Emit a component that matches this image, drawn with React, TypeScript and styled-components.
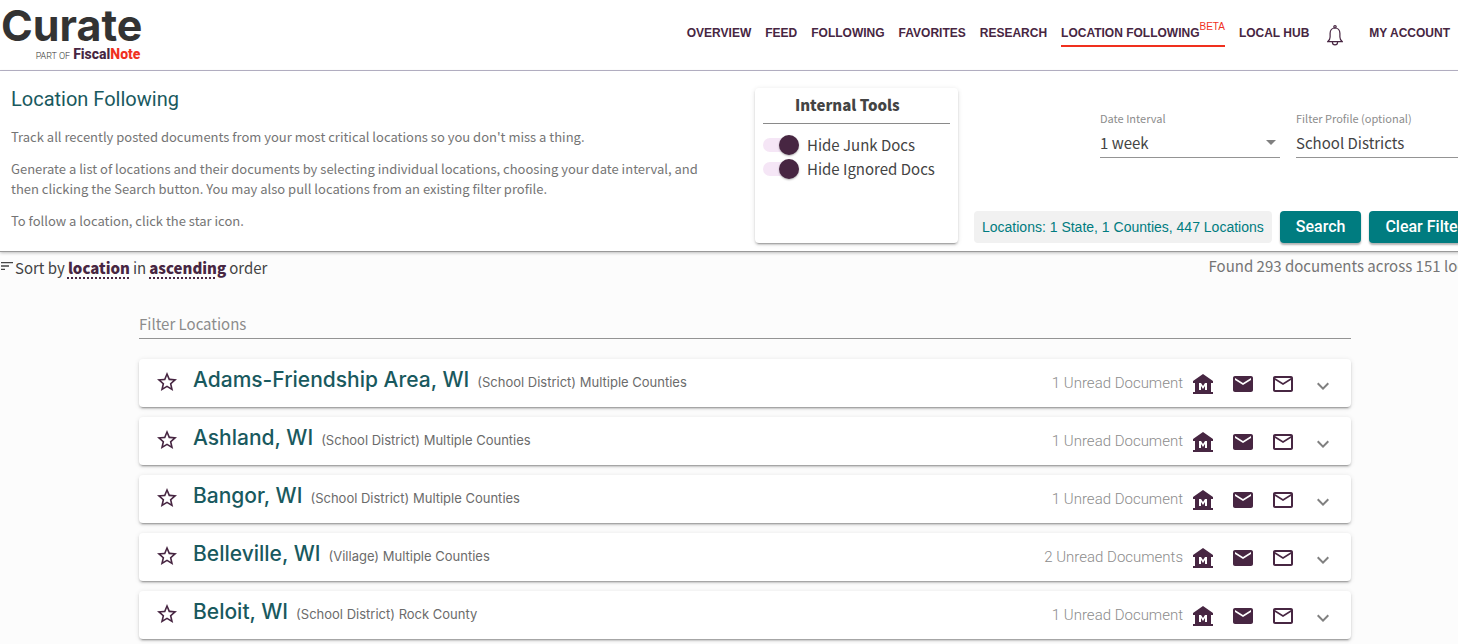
import React from "react";
import styled, { createGlobalStyle } from "styled-components";
import {
  MdEmail,
  MdExpandMore,
  MdMailOutline,
  MdMuseum,
  MdSort,
  MdStarBorder,
} from "react-icons/md";

const plum = "#472642";
const teal = "#007c80";
const deepTeal = "#19595e";
const red = "#f0301e";
const sourceStack = '"Noto Sans CJK SC", "Noto Sans", sans-serif';
const displayStack = "Roboto, sans-serif";
const headingStack = "Inter, sans-serif";
const helveticaStack = '"Liberation Sans", Arial, sans-serif';

const GlobalStyle = createGlobalStyle`
  *, *::before, *::after { box-sizing: border-box; }
  body {
    margin: 0;
    background: #fcfcfc;
    color: #444;
    font-family: ${sourceStack};
    font-size: 15px;
    line-height: 24px;
    overflow-x: hidden;
  }
  button, input, select { font: inherit; color: inherit; margin: 0; }
  h1, h2, h3, p { margin: 0; }
`;

const Header = styled.header`
  display: flex;
  justify-content: space-between;
  height: 71px;
  padding-right: 8px;
  background: #fff;
  border-bottom: 1px solid #b9b5c9;
`;

const Logo = styled.a`
  display: flex;
  flex-direction: column;
  align-items: flex-end;
  padding: 4px 0 0 1px;
  color: #333;
  text-decoration: none;
`;

const Wordmark = styled.span`
  font: 700 43px/42px ${headingStack};
`;

const Tagline = styled.span`
  display: flex;
  align-items: baseline;
  gap: 3px;
  padding-right: 2px;
  font: 300 9px/16px ${displayStack};
`;

const Fiscal = styled.strong`
  font-size: 14px;
  font-weight: 800;
  color: ${plum};
  em { font-style: normal; color: ${red}; }
`;

const Nav = styled.nav`
  display: flex;
  align-items: flex-start;
  gap: 14px;
  padding-top: 19px;
`;

const NavLink = styled.a<{ $active?: boolean }>`
  display: flex;
  height: 28px;
  font: 700 12px/28px ${helveticaStack};
  color: ${plum};
  text-decoration: none;
  white-space: nowrap;
  border-bottom: 2px solid ${(p) => (p.$active ? red : "transparent")};
`;

const Beta = styled.span`
  font-size: 10px;
  font-weight: 400;
  line-height: 16px;
  color: ${red};
`;

const BellButton = styled.button`
  display: flex;
  margin: 6px 12px 0 4px;
  padding: 0;
  border: 0;
  background: none;
  color: ${plum};
`;

const Content = styled.main`
  width: calc(100% + 32px);
`;

const Panel = styled.section`
  display: grid;
  grid-template-columns: 50% 203px minmax(0, 1fr);
  column-gap: 10px;
  padding-bottom: 8px;
  background: #fff;
  border-bottom: 1px solid #999;
  box-shadow: 0 1px 3px rgba(0, 0, 0, 0.25);
`;

const Intro = styled.div`
  display: flex;
  flex-direction: column;
  gap: 12px;
  padding: 16px 20px 0 11px;
  font-size: 13px;
  line-height: 20px;
  color: #757575;
`;

const Title = styled.h1`
  margin-bottom: 4px;
  font: 400 20px/24px ${displayStack};
  color: ${deepTeal};
`;

const cardShadow = `
  background: #fff;
  border-radius: 4px;
  box-shadow: 0 3px 1px -2px rgba(0, 0, 0, 0.2), 0 2px 2px 0 rgba(0, 0, 0, 0.14),
    0 1px 5px 0 rgba(0, 0, 0, 0.12);
`;

const Tools = styled.section`
  ${cardShadow}
  min-height: 155px;
  margin-top: 17px;
  padding: 5px 8px;
`;

const ToolsTitle = styled.h2`
  margin-bottom: 9px;
  padding: 0 32px 6px;
  font-size: 15px;
  font-weight: 900;
  line-height: 24px;
  white-space: nowrap;
  border-bottom: 1px solid #8a8a8a;
`;

const ToggleLabel = styled.label`
  display: flex;
  align-items: center;
  gap: 8px;
  white-space: nowrap;
`;

const Toggle = styled.input`
  appearance: none;
  display: flex;
  align-items: center;
  width: 36px;
  height: 14px;
  border-radius: 7px;
  background: #f5e6f6;
  &::after {
    content: "";
    width: 20px;
    height: 20px;
    border-radius: 50%;
    background: #bbb;
    box-shadow: 0 1px 2px rgba(0, 0, 0, 0.3);
  }
  &:checked::after { margin-left: 16px; background: ${plum}; }
`;

const Controls = styled.div`
  display: flex;
  flex-direction: column;
  justify-content: space-between;
  padding: 37px 14px 0 6px;
`;

const Fields = styled.div`
  display: flex;
  justify-content: flex-end;
  gap: 16px;
`;

const Field = styled.div`
  position: relative;
  display: flex;
  flex-direction: column;
  gap: 1px;
  width: 180px;
  label { font-size: 11px; line-height: 20px; color: #8c8c8c; }
  svg { position: absolute; right: 4px; bottom: 13px; }
`;

const Select = styled.select`
  appearance: none;
  height: 29px;
  padding: 0 20px 1px 0;
  border: 0;
  border-bottom: 1px solid #949494;
  border-radius: 0;
  background: none;
`;

const Actions = styled.div`
  display: flex;
  gap: 8px;
`;

const Chip = styled.button`
  flex: none;
  height: 32px;
  padding: 0 8px;
  border: 0;
  border-radius: 4px;
  background: #f1f1f1;
  color: ${teal};
  font: 400 14px/32px ${helveticaStack};
  white-space: nowrap;
`;

const ActionButton = styled.button`
  flex: none;
  height: 32px;
  padding: 0 16px;
  border: 0;
  border-radius: 4px;
  background: ${teal};
  color: #fff;
  font: 500 16px/32px ${displayStack};
  white-space: nowrap;
  box-shadow: 0 2px 2px rgba(0, 0, 0, 0.3);
`;

const SummaryBar = styled.div`
  display: flex;
  justify-content: space-between;
  width: calc(100% + 18px);
  padding-top: 4px;
`;

const Sort = styled.div`
  display: flex;
  gap: 3px;
  line-height: 24px;
  svg { margin: 2px -3px 0 -1px; }
`;

const SortButton = styled.button`
  padding: 0;
  border: 0;
  background: none;
  font-weight: 900;
  color: ${plum};
  text-decoration: underline dotted 2px;
  text-underline-offset: 3px;
`;

const Found = styled.p`
  line-height: 20px;
  color: #757575;
`;

const List = styled.section`
  display: flex;
  flex-direction: column;
  gap: 10px;
  margin: 0 139px;
  padding: 28px 0 10px;
`;

const FilterInput = styled.input`
  height: 31px;
  margin-bottom: 10px;
  padding: 0;
  border: 0;
  border-bottom: 1px solid #949494;
  background: none;
  &::placeholder { color: #8c8c8c; opacity: 1; }
`;

const Row = styled.article`
  ${cardShadow}
  display: flex;
  align-items: center;
  height: 48px;
  padding: 0 16px;
`;

const IconButton = styled.button<{ $muted?: boolean }>`
  display: flex;
  padding: ${(p) => (p.$muted ? "2px 0 0" : "0")};
  border: 0;
  background: none;
  color: ${(p) => (p.$muted ? "#808080" : plum)};
`;

const StarButton = styled(IconButton)`
  padding-bottom: 2px;
`;

const Name = styled.h3`
  flex: 1;
  padding: 0 0 4px 14px;
  font: 500 21px/24px ${headingStack};
  color: ${deepTeal};
  small {
    margin-left: 8px;
    font-size: 13px;
    font-weight: 400;
    color: #6b6b6b;
  }
`;

const Unread = styled.span`
  margin-right: 10px;
  font: 300 15px/24px ${displayStack};
  color: #8c8c8c;
`;

const RowActions = styled.div`
  display: flex;
  gap: 16px;
  height: 24px;
  margin: 2px 0 0 -2px;
`;

const locations = [
  { name: "Adams-Friendship Area, WI", detail: "(School District) Multiple Counties", unread: 1 },
  { name: "Ashland, WI", detail: "(School District) Multiple Counties", unread: 1 },
  { name: "Bangor, WI", detail: "(School District) Multiple Counties", unread: 1 },
  { name: "Belleville, WI", detail: "(Village) Multiple Counties", unread: 2 },
  { name: "Beloit, WI", detail: "(School District) Rock County", unread: 1 },
];

const BellIcon = () => (
  <svg width="16" height="21" viewBox="0 0 16 21" fill="none" stroke="currentColor" strokeWidth="1.2">
    <circle cx="8" cy="1.8" r="1.2" />
    <path d="M0.8 16.6h14.4c-1.7-1.2-2.300-2.500-2.300-4.500V8.300C12.900 5.200 10.800 3 8 3S3.100 5.200 3.100 8.300v3.800c0 2-.6 3.300-2.300 4.500z" />
    <path d="M5.400 17c0 1.800 1.200 2.900 2.600 2.900s2.600-1.100 2.600-2.900" />
  </svg>
);

const Caret = () => (
  <svg width="10" height="5" viewBox="0 0 10 5" fill="#808080" aria-hidden="true">
    <path d="M0 0h10L5 5z" />
  </svg>
);

export default function App() {
  return (
    <>
      <GlobalStyle />
      <Header>
        <Logo href="#">
          <Wordmark>Curate</Wordmark>
          <Tagline>
            PART OF
            <Fiscal>Fiscal<em>Note</em></Fiscal>
          </Tagline>
        </Logo>
        <Nav>
          {["OVERVIEW", "FEED", "FOLLOWING", "FAVORITES", "RESEARCH"].map((item) => (
            <NavLink href="#" key={item}>{item}</NavLink>
          ))}
          <NavLink href="#" $active>
            LOCATION FOLLOWING<Beta>BETA</Beta>
          </NavLink>
          <NavLink href="#">LOCAL HUB</NavLink>
          <BellButton aria-label="Notifications"><BellIcon /></BellButton>
          <NavLink href="#">MY ACCOUNT</NavLink>
        </Nav>
      </Header>
      <Content>
        <Panel>
          <Intro>
            <Title>Location Following</Title>
            <p>Track all recently posted documents from your most critical locations so you don't miss a thing.</p>
            <p>
              Generate a list of locations and their documents by selecting individual locations, choosing your
              date interval, and then clicking the Search button. You may also pull locations from an existing
              filter profile.
            </p>
            <p>To follow a location, click the star icon.</p>
          </Intro>
          <Tools>
            <ToolsTitle>Internal Tools</ToolsTitle>
            <ToggleLabel><Toggle type="checkbox" defaultChecked />Hide Junk Docs</ToggleLabel>
            <ToggleLabel><Toggle type="checkbox" defaultChecked />Hide Ignored Docs</ToggleLabel>
          </Tools>
          <Controls>
            <Fields>
              <Field>
                <label htmlFor="interval">Date Interval</label>
                <Select id="interval"><option>1 week</option></Select>
                <Caret />
              </Field>
              <Field>
                <label htmlFor="profile">Filter Profile (optional)</label>
                <Select id="profile"><option>School Districts</option></Select>
                <Caret />
              </Field>
            </Fields>
            <Actions>
              <Chip>Locations: 1 State, 1 Counties, 447 Locations</Chip>
              <ActionButton>Search</ActionButton>
              <ActionButton>Clear Filters</ActionButton>
            </Actions>
          </Controls>
        </Panel>
        <SummaryBar>
          <Sort>
            <MdSort size={16} />
            <span>Sort by</span>
            <SortButton>location</SortButton>
            <span>in</span>
            <SortButton>ascending</SortButton>
            <span>order</span>
          </Sort>
          <Found>Found 293 documents across 151 locations</Found>
        </SummaryBar>
        <List>
          <FilterInput type="text" placeholder="Filter Locations" aria-label="Filter Locations" />
          {locations.map((loc) => (
            <Row key={loc.name}>
              <StarButton aria-label="Follow location"><MdStarBorder size={24} /></StarButton>
              <Name>{loc.name}<small>{loc.detail}</small></Name>
              <Unread>{loc.unread} Unread Document{loc.unread > 1 ? "s" : ""}</Unread>
              <RowActions>
                <IconButton aria-label="Local government"><MdMuseum size={24} /></IconButton>
                <IconButton aria-label="Mark as read"><MdEmail size={24} /></IconButton>
                <IconButton aria-label="Mark as unread"><MdMailOutline size={24} /></IconButton>
                <IconButton aria-label="Expand" $muted><MdExpandMore size={24} /></IconButton>
              </RowActions>
            </Row>
          ))}
        </List>
      </Content>
    </>
  );
}
